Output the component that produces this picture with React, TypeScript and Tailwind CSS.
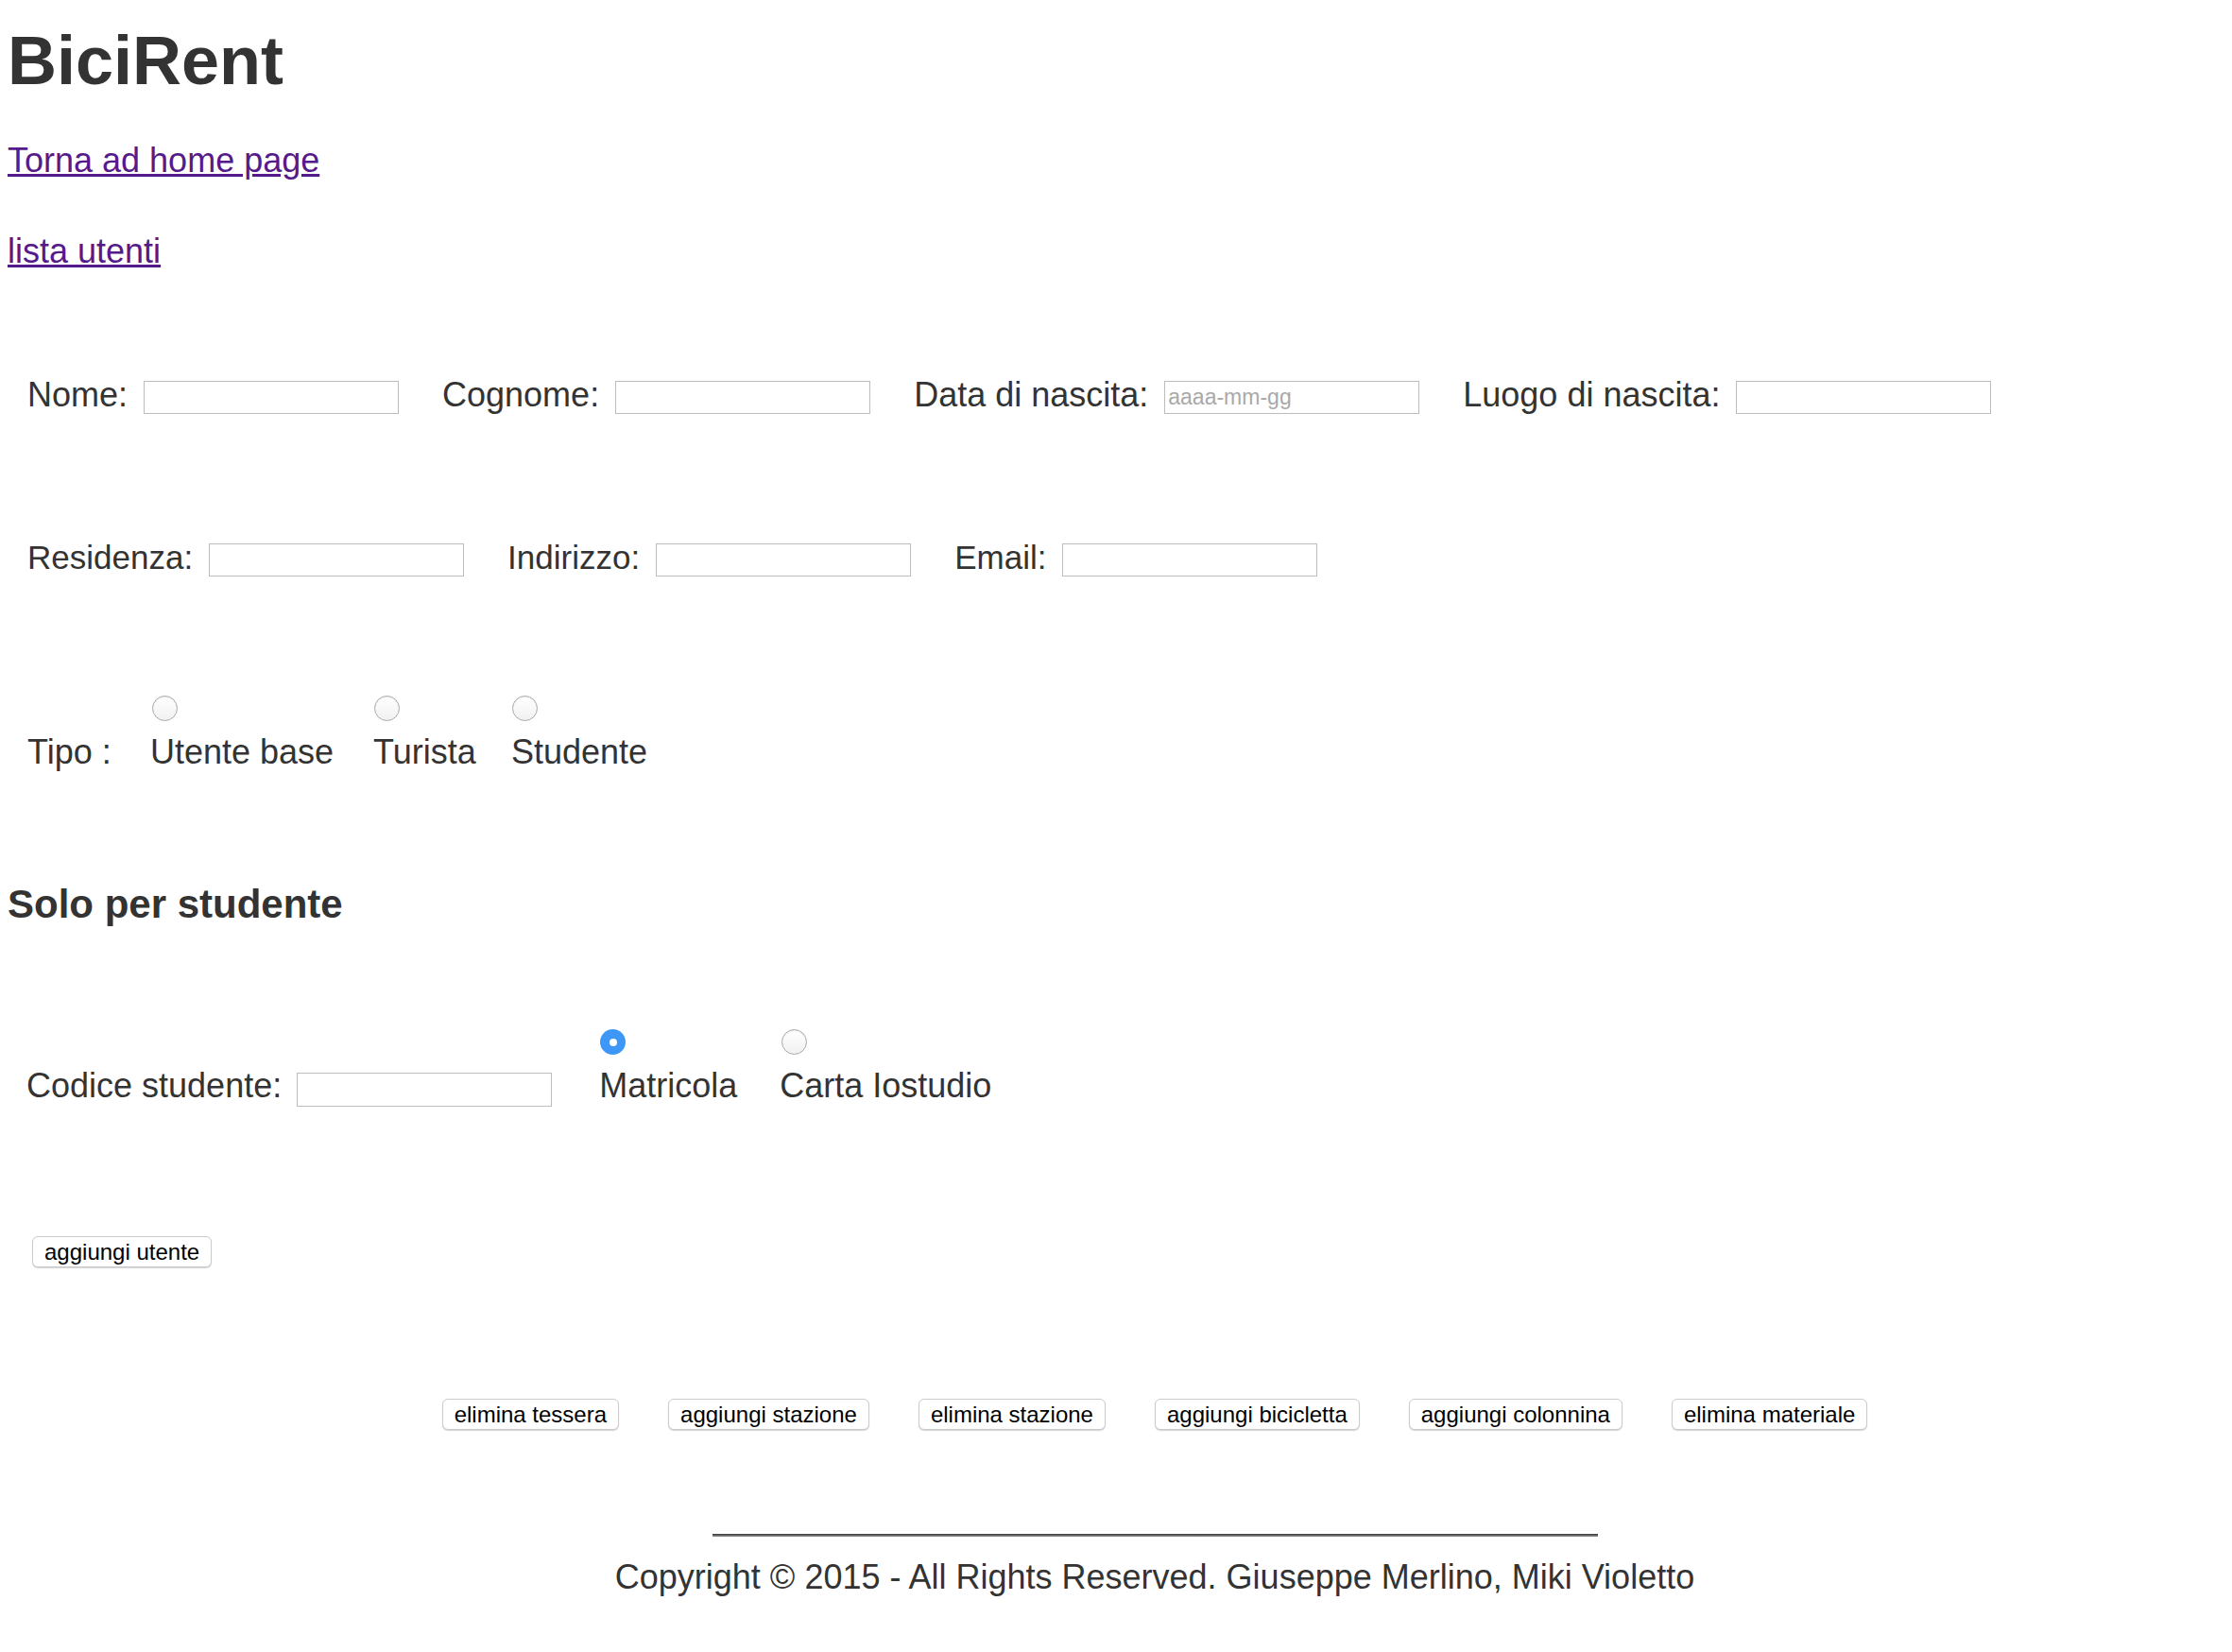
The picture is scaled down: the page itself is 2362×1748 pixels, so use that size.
import React from "react";

const font = { fontFamily: '"Liberation Sans", Arial, Helvetica, sans-serif' };

function Radio({ checked = false }: { checked?: boolean }) {
  if (checked) {
    return (
      <span className="flex h-[27px] w-[27px] items-center justify-center rounded-full bg-[#3d97f7]">
        <span className="h-[8px] w-[8px] rounded-full bg-white" />
      </span>
    );
  }
  return (
    <span className="block h-[27px] w-[27px] rounded-full border border-[#a9a9a9] bg-gradient-to-b from-white to-[#f1f1f1] shadow-[inset_0_1px_1px_rgba(0,0,0,0.08)]" />
  );
}

function Field({ label, placeholder }: { label: string; placeholder?: string }) {
  return (
    <div className="flex items-center gap-[17px]">
      <span className="pb-[5px]">{label}</span>
      <div className="flex h-[35px] w-[270px] items-center border border-[#bdbdbd] bg-white pl-[3px]">
        {placeholder && (
          <span className="text-[23px] leading-none text-[#a9a9a9]">{placeholder}</span>
        )}
      </div>
    </div>
  );
}

function Btn({ children }: { children: React.ReactNode }) {
  return (
    <button className="h-[33px] rounded-[6px] border border-[#cbcbcb] bg-white px-[12px] text-[24px] leading-none text-black shadow-[0_1px_1px_rgba(0,0,0,0.18)]">
      {children}
    </button>
  );
}

export default function App() {
  return (
    <div
      className="min-h-[1748px] bg-white pl-[8px] text-[36px] leading-[40px] text-[#333333]"
      style={font}
    >
      <h1 className="pt-[24px] text-[72px] font-bold leading-[80px] text-[#333333]">
        BiciRent
      </h1>
      <p className="mt-[46px]">
        <a href="#" className="text-[#551a8b] underline">
          Torna ad home page
        </a>
      </p>
      <p className="mt-[56px]">
        <a href="#" className="text-[#551a8b] underline">
          lista utenti
        </a>
      </p>

      {/* ---------- anagrafica ---------- */}
      <div className="mt-[114px] flex h-[40px] items-center gap-[46px] pl-[21px]">
        <Field label="Nome:" />
        <Field label="Cognome:" />
        <Field label="Data di nascita:" placeholder="aaaa-mm-gg" />
        <Field label="Luogo di nascita:" />
      </div>

      <div className="mt-[132px] flex h-[40px] items-center gap-[46px] pl-[21px] text-[35px]">
        <Field label="Residenza:" />
        <Field label="Indirizzo:" />
        <Field label="Email:" />
      </div>

      {/* ---------- tipo ---------- */}
      <div className="mt-[124px] flex items-end pl-[21px]">
        <span className="w-[130px]">Tipo :</span>
        <div className="flex w-[236px] flex-col gap-[13px]">
          <span className="pl-[2px]">
            <Radio />
          </span>
          <span>Utente base</span>
        </div>
        <div className="flex w-[146px] flex-col gap-[13px]">
          <span className="pl-[1px]">
            <Radio />
          </span>
          <span>Turista</span>
        </div>
        <div className="flex flex-col gap-[13px]">
          <span className="pl-[1px]">
            <Radio />
          </span>
          <span>Studente</span>
        </div>
      </div>

      <h2 className="mt-[117px] text-[42px] font-bold leading-[48px]">Solo per studente</h2>

      <div className="mt-[108px] flex items-end pl-[20px]">
        <span className="mr-[16px]">Codice studente:</span>
        <div className="mb-[-2px] mr-[50px] h-[36px] w-[270px] border border-[#bdbdbd] bg-white" />
        <div className="flex w-[191px] flex-col gap-[13px]">
          <span className="pl-[1px]">
            <Radio checked />
          </span>
          <span>Matricola</span>
        </div>
        <div className="flex flex-col gap-[13px]">
          <span className="pl-[2px]">
            <Radio />
          </span>
          <span>Carta Iostudio</span>
        </div>
      </div>

      <div className="mt-[139px] flex pl-[26px]">
        <Btn>aggiungi utente</Btn>
      </div>

      {/* ---------- azioni ---------- */}
      <div className="ml-[74px] mt-[139px] flex justify-center gap-[52px]">
        <Btn>elimina tessera</Btn>
        <Btn>aggiungi stazione</Btn>
        <Btn>elimina stazione</Btn>
        <Btn>aggiungi bicicletta</Btn>
        <Btn>aggiungi colonnina</Btn>
        <Btn>elimina materiale</Btn>
      </div>

      <div className="ml-[74px] mt-[110px] flex flex-col items-center">
        <div className="h-[3px] w-[937px] bg-gradient-to-b from-[#333333] to-[#9a9a9a]" />
        <p className="mt-[23px]">Copyright © 2015 - All Rights Reserved. Giuseppe Merlino, Miki Violetto</p>
      </div>
    </div>
  );
}
